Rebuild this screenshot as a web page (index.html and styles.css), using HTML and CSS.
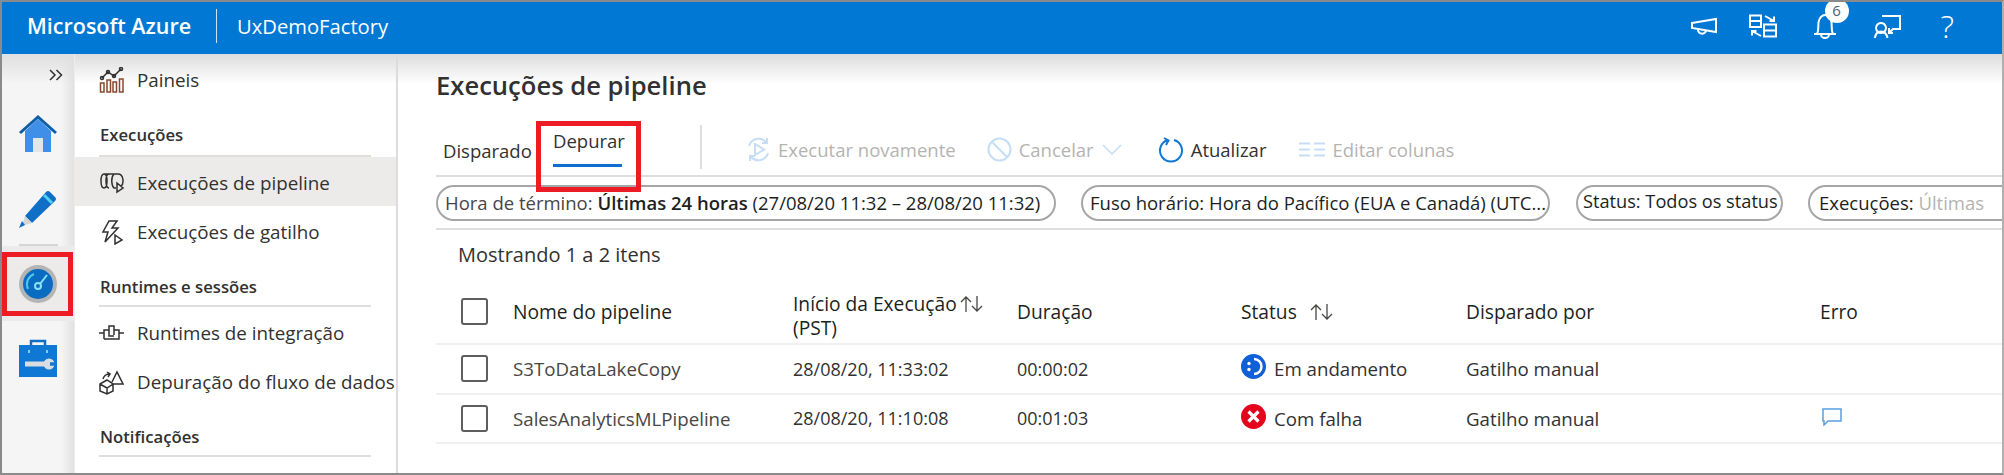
FILE: index.html
```html
<!DOCTYPE html>
<html lang="pt">

<head>
    <meta charset="UTF-8" />
    <title>Execuções de pipeline</title>
    <link rel="stylesheet" href="styles.css">
</head>

<body>
    <div class="frame">
        <header class="topbar">
            <span class="brand">Microsoft Azure</span>
            <span class="factory">UxDemoFactory</span>
            <div class="top-icons">
                <svg class="ti-mega" width="28" height="18" viewBox="0 0 28 18"><path d="M2 6 L26 2 V15 L2 11Z M8 12.500 a4 3.600 0 0 0 8 1" /></svg>
                <svg class="ti-switch" width="28" height="24" viewBox="0 0 28 24"><path d="M1 1.500 H12 V13 H1Z M1 7 H12 M16 2 L25 7 M25 2.500 V7 H20.500 M15 10.500 H27 V22.500 H15Z M15 16.500 H27 M12 22 L3 17 M3 21.500 V17 H7.500" /></svg>
                <span class="bell">
                    <svg width="24" height="26" viewBox="0 0 24 26"><path d="M1 21 H23 M4 21 C6 17 5 13 5.500 9.500 C6 5 9 2 12 2 C15 2 18 5 18.500 9.500 C19 13 18 17 20 21 M8 21.500 a4 3.500 0 0 0 8 0" /></svg>
                    <span class="badge">6</span>
                </span>
                <svg class="ti-feedback" width="27" height="25" viewBox="0 0 27 25"><path d="M8 2 H26 V15 H19 L15 19 M15 14 V19 H19 M7 9 a5 5 0 1 0 .01 0 M1 24 C1.500 19 4 17.500 7 17.500 C10 17.500 12.500 19 13.500 24" /></svg>
                <span class="help">?</span>
            </div>
        </header>

        <div class="shell">
            <aside class="rail">
                <div class="rail-top">
                    <svg width="14" height="12" viewBox="0 0 14 12"><path d="M1 1 L6 6 L1 11 M7.500 1 L12.500 6 L7.500 11" /></svg>
                </div>
                <div class="rail-item">
                    <svg width="38" height="37" viewBox="0 0 38 37">
                        <path d="M6 16 L19 4 L32 16 V37 H6Z" fill="#3f8fe8" />
                        <path d="M1 18 L19 2 L37 18" fill="none" stroke="#0f5ea8" stroke-width="3" />
                        <rect x="14" y="23" width="10" height="14" fill="#dfe6ee" />
                    </svg>
                </div>
                <div class="rail-item rail-sep">
                    <svg width="38" height="38" viewBox="0 0 38 38">
                        <path d="M27 2 Q29 0 31 2 L36 7 Q38 9 36 11 L13 33 L6 26Z" fill="#0f6fc6" />
                        <path d="M25 5 L33 13" stroke="#52d0f0" stroke-width="3" />
                        <path d="M6 26 L13 33 L3 36Z" fill="#d5d5d5" />
                        <path d="M3 31 L6 35 L0 38Z" fill="#0f6fc6" />
                    </svg>
                </div>
                <div class="rail-active">
                    <div class="rail-callout">
                        <svg width="38" height="38" viewBox="0 0 38 38">
                            <circle cx="19" cy="19" r="19" fill="#b4b4b4" />
                            <circle cx="19" cy="19" r="15" fill="#0a6cc0" />
                            <path d="M9 24 A11 11 0 0 1 15 9" fill="none" stroke="#50c8ee" stroke-width="2" />
                            <circle cx="19" cy="21" r="3" fill="none" stroke="#8be0f5" stroke-width="2" />
                            <path d="M21 19 L28 10" stroke="#8be0f5" stroke-width="2" />
                        </svg>
                    </div>
                </div>
                <div class="rail-item rail-tools">
                    <svg width="38" height="38" viewBox="0 0 38 38">
                        <path d="M12 7 V2 H26 V7" fill="none" stroke="#0f6fc6" stroke-width="2.500" />
                        <rect x="0" y="6" width="38" height="32" fill="#0f78d4" />
                        <path d="M6 25 H28" stroke="#d8dde2" stroke-width="5" />
                        <circle cx="30" cy="25" r="5.500" fill="#d8dde2" />
                        <path d="M31 25 H37" stroke="#0f78d4" stroke-width="3.500" />
                        <rect x="9" y="11" width="2" height="3" fill="#7fd0f0" />
                        <rect x="27" y="11" width="2" height="3" fill="#7fd0f0" />
                    </svg>
                </div>
            </aside>

            <nav class="nav">
                <a class="nav-item nav-first">
                    <svg width="25" height="26" viewBox="0 0 25 26">
                        <path d="M1.500 16 H5 V25 H1.500Z M8 13 H11.500 V25 H8Z M14 15 H17.500 V25 H14Z M20.500 12 H24 V25 H20.500Z" stroke="#8a4a30" />
                        <path d="M3 11 L9 5 L15 9 L22 2" />
                        <circle cx="3" cy="11" r="1.500" /><circle cx="9" cy="5" r="1.500" /><circle cx="15" cy="9" r="1.500" /><circle cx="22" cy="2" r="1.500" />
                    </svg>
                    Paineis
                </a>
                <div class="nav-head nav-head-first">Execuções</div>
                <a class="nav-item nav-selected">
                    <svg width="25" height="22" viewBox="0 0 25 22"><path d="M5 2 C1 2 1 16 5 16 C9 16 9 2 5 2 M10 2 C6 2 6 16 10 16 M5 2 H19 C25 2 25 12 22 14 M15 2 C12 5 12 13 15 16 H17 M18 11 L24 16 L18 20Z" /></svg>
                    Execuções de pipeline
                </a>
                <a class="nav-item">
                    <svg width="25" height="25" viewBox="0 0 25 25"><path d="M10 1 H18 L13 8 H19 L6 22 L9 12 H4Z M16 15 L23 20 L16 24Z" /></svg>
                    Execuções de gatilho
                </a>
                <div class="nav-head">Runtimes e sessões</div>
                <a class="nav-item">
                    <svg width="25" height="16" viewBox="0 0 25 16"><path d="M0 8 H5 M20 8 H25 M5 14 V5 H10 V1 H15 V10 M10 5 V11 H15 M15 5 H20 V14 H5" /></svg>
                    Runtimes de integração
                </a>
                <a class="nav-item">
                    <svg width="25" height="25" viewBox="0 0 25 25"><path d="M1 14 L8 10 L14 14 V21 L8 24 L1 21Z M1 14 L8 18 L14 14 M8 18 V24 M14 14 H24 L18 2 L13 12 M4 9 C5 5 8 4 11 4 M8 2 L11 4 L9 7" /></svg>
                    Depuração do fluxo de dados
                </a>
                <div class="nav-head">Notificações</div>
            </nav>

            <main class="content">
                <h1 class="title">Execuções de pipeline</h1>

                <div class="toolbar">
                    <span class="tab">Disparado</span>
                    <span class="tab tab-active">Depurar</span>
                    <span class="tool-sep"></span>
                    <span class="tool disabled tool-rerun">
                        <svg width="25" height="25" viewBox="0 0 25 25"><path d="M3 9 A10 10 0 0 1 20 5 M21 1 V6 H16 M22 16 A10 10 0 0 1 5 20 M4 24 V19 H9 M9 7 L18 12.500 L9 18Z" /></svg>
                        Executar novamente
                    </span>
                    <span class="tool disabled tool-cancel">
                        <svg width="25" height="25" viewBox="0 0 25 25"><circle cx="12.500" cy="12.500" r="11" /><path d="M5 5 L20 20" /></svg>
                        Cancelar
                        <svg class="chev" width="20" height="11" viewBox="0 0 20 11"><path d="M1 1 L10 10 L19 1" /></svg>
                    </span>
                    <span class="tool tool-refresh">
                        <svg width="26" height="26" viewBox="0 0 26 26"><path d="M10 3 A11 11 0 1 0 16 3 M6 1 L10.500 3.500 L8 8" /></svg>
                        Atualizar
                    </span>
                    <span class="tool disabled tool-cols">
                        <svg width="26" height="15" viewBox="0 0 26 15"><path d="M0 1.500 H11 M15 1.500 H26 M0 7.500 H11 M15 7.500 H26 M0 13.500 H11 M15 13.500 H26" /></svg>
                        Editar colunas
                    </span>
                </div>

                <div class="filters">
                    <span class="chip chip-time">Hora de término: <b>Últimas 24 horas</b> <span class="dark">(27/08/20 11:32 – 28/08/20 11:32)</span></span>
                    <span class="chip chip-zone dark">Fuso horário: Hora do Pacífico (EUA e Canadá) (UTC...</span>
                    <span class="chip chip-status dark">Status: Todos os status</span>
                    <span class="chip chip-runs dark">Execuções: <span class="muted">Últimas</span></span>
                </div>

                <p class="count">Mostrando 1 a 2 itens</p>

                <div class="row row-head">
                    <span class="check"></span>
                    <span class="name-head">Nome do pipeline</span>
                    <span class="start-col">Início da Execução<svg class="sort" width="24" height="18" viewBox="0 0 24 18"><path d="M6 17 V2 M1 7 L6 2 L11 7 M17 1 V16 M12 11 L17 16 L22 11" /></svg><br>(PST)</span>
                    <span>Duração</span>
                    <span>Status<svg class="sort sort-status" width="24" height="18" viewBox="0 0 24 18"><path d="M6 17 V2 M1 7 L6 2 L11 7 M17 1 V16 M12 11 L17 16 L22 11" /></svg></span>
                    <span>Disparado por</span>
                    <span>Erro</span>
                </div>
                <div class="row">
                    <span class="check"></span>
                    <span class="name">S3ToDataLakeCopy</span>
                    <span class="num">28/08/20, 11:33:02</span>
                    <span class="num">00:00:02</span>
                    <span class="status">
                        <svg width="25" height="25" viewBox="0 0 25 25"><circle cx="12.500" cy="12.500" r="12.500" fill="#0f5fd7" /><path d="M13 5 A7.500 7.500 0 0 1 13 20" fill="none" stroke="#fff" stroke-width="2.500" /><circle cx="8" cy="9.500" r="1.700" fill="#fff" /><circle cx="8" cy="15.500" r="1.700" fill="#fff" /></svg>
                        Em andamento
                    </span>
                    <span>Gatilho manual</span>
                    <span></span>
                </div>
                <div class="row">
                    <span class="check"></span>
                    <span class="name">SalesAnalyticsMLPipeline</span>
                    <span class="num">28/08/20, 11:10:08</span>
                    <span class="num">00:01:03</span>
                    <span class="status">
                        <svg width="25" height="25" viewBox="0 0 25 25"><circle cx="12.500" cy="12.500" r="12.500" fill="#e3051b" /><path d="M7.500 7.500 L17.500 17.500 M17.500 7.500 L7.500 17.500" stroke="#fff" stroke-width="3.200" /></svg>
                        Com falha
                    </span>
                    <span>Gatilho manual</span>
                    <span>
                        <svg class="comment" width="20" height="18" viewBox="0 0 20 18"><path d="M1 1 H19 V13 H6 L2 17 V13 H1Z" /></svg>
                    </span>
                </div>

                <div class="tab-callout"></div>
            </main>
        </div>
    </div>
</body>

</html>
```

FILE: styles.css
```css
:root {
    --azure: #0078d4;
    --line: #e6e6e6;
    --text: #323130;
    --muted: #b5b3b1;
    --selected: #edebe9;
    --callout: #ed1c24;
}

* {
    box-sizing: border-box;
}

html,
body {
    margin: 0;
    height: 100%;
    overflow: hidden;
}

body {
    font-family: "Open Sans", sans-serif;
    color: var(--text);
    background: white;
}

.frame {
    width: 2004px;
    height: 475px;
    border: 2px solid #8a8a8a;
    border-right-color: #b0b0b0;
    display: flex;
    flex-direction: column;
    overflow: hidden;
}

/* top bar */
.topbar {
    height: 52px;
    flex: none;
    background: var(--azure);
    color: white;
    display: flex;
    align-items: center;
    padding: 0 0 4px 25px;
}

.brand {
    font-size: 21.500px;
    font-weight: 600;
    width: 190px;
    border-right: 1px solid #cfe4f6;
    line-height: 34px;
    white-space: nowrap;
}

.factory {
    font-size: 20.200px;
    margin-left: 20px;
}

.top-icons {
    margin-left: auto;
    display: flex;
    align-items: center;
    height: 48px;
}

.top-icons svg {
    display: block;
    fill: none;
    stroke: white;
    stroke-width: 2;
}

.ti-mega {
    margin-right: 31px;
}

.ti-switch {
    margin-right: 36px;
}

.bell {
    position: relative;
    margin-right: 37px;
}

.badge {
    position: absolute;
    left: 12px;
    top: -14px;
    width: 24px;
    height: 24px;
    border-radius: 50%;
    background: white;
    color: #45627e;
    font-size: 15px;
    line-height: 22px;
    text-align: center;
}

.ti-feedback {
    margin-right: 40px;
}

.help {
    font-size: 32px;
    font-weight: 300;
    line-height: 40px;
    margin-right: 48px;
}

.shell {
    flex: 1;
    display: flex;
    min-height: 0;
}

/* icon rail */
.rail {
    width: 72px;
    flex: none;
    background:
        linear-gradient(#dfdfdf, rgba(245, 245, 245, 0) 30px),
        linear-gradient(to right, #f5f5f5 82%, #e2e2e2);
}

.rail svg {
    display: block;
}

.rail-top {
    height: 42px;
    padding: 15px 11px 0 0;
    display: flex;
    justify-content: flex-end;
}

.rail-top svg {
    fill: none;
    stroke: #323130;
    stroke-width: 1.500;
}

.rail-item {
    height: 75px;
    display: flex;
    align-items: center;
    justify-content: center;
}

.rail-tools {
    padding-bottom: 2px;
}

.rail-sep {
    position: relative;
}

.rail-sep::after {
    content: "";
    position: absolute;
    left: 17px;
    right: 16px;
    bottom: 0;
    height: 2px;
    background: #d6d6d6;
}

.rail-active {
    height: 75px;
    background: var(--selected);
    display: flex;
    align-items: center;
}

.rail-callout {
    width: 71px;
    height: 64px;
    border: 5px solid var(--callout);
    display: flex;
    align-items: center;
    justify-content: center;
}

/* navigation */
.nav {
    width: 324px;
    flex: none;
    border-left: 1px solid #ececec;
    border-right: 2px solid #dcdcdc;
    background: linear-gradient(#dcdcdc, white 30px) no-repeat;
    font-size: 18.800px;
}

.nav-item {
    height: 49px;
    padding: 3px 0 0 24px;
    display: flex;
    align-items: center;
    white-space: nowrap;
}

.nav-item svg {
    width: 25px;
    flex: none;
    margin-right: 13px;
    fill: none;
    stroke: #323130;
    stroke-width: 1.500;
}

.nav-first {
    height: 51px;
    padding-top: 0;
}

.nav-selected {
    background: var(--selected);
}

.nav-head {
    height: 52px;
    margin: 0 25px 0 24px;
    border-bottom: 2px solid #e1dfdd;
    padding: 20px 0 0 1px;
    font-size: 16.700px;
    font-weight: 600;
    line-height: 24px;
}

.nav-head-first {
    padding-top: 18px;
}

/* main area */
.content {
    flex: 1;
    min-width: 0;
    position: relative;
    background: linear-gradient(#dcdcdc, white 30px) no-repeat;
    overflow: hidden;
}

.title {
    margin: 0;
    height: 67px;
    padding: 14px 0 0 38px;
    font-size: 25.600px;
    font-weight: 600;
    line-height: 36px;
}

.toolbar {
    height: 56px;
    margin-left: 38px;
    border-bottom: 2px solid #dedede;
    display: flex;
    align-items: center;
    font-size: 18.500px;
    white-space: nowrap;
}

.tab {
    margin-left: 7px;
    width: 108px;
    padding-top: 4px;
}

.tab-active {
    margin-left: 2px;
    width: 147px;
    height: 49px;
    padding: 4px 0 0 0;
    position: relative;
    line-height: 26px;
}

.tab-active::after {
    content: "";
    position: absolute;
    left: 0;
    width: 69px;
    top: 40px;
    height: 3px;
    background: #0f6fd0;
}

.tool-sep {
    width: 2px;
    height: 44px;
    background: #dedede;
    margin: 0 44px 2px 0;
}

.tool {
    display: flex;
    align-items: center;
    padding-top: 3px;
}

.tool svg {
    fill: none;
    stroke: #0f78d4;
    stroke-width: 2;
    margin-right: 7px;
    flex: none;
}

.tool.disabled {
    color: var(--muted);
}

.tool.disabled svg {
    stroke: #c5def5;
}

.tool .chev {
    stroke: #a9a7a5;
    stroke-width: 1.500;
    margin: 0 0 0 8px;
}

.tool-cancel {
    margin-left: 31px;
}

.tool-refresh {
    margin-left: 36px;
}

.tool-cols {
    margin-left: 33px;
}

.filters {
    height: 53px;
    margin-left: 38px;
    border-bottom: 2px solid #dedede;
    display: flex;
    align-items: flex-start;
    padding-top: 8px;
    font-size: 18.500px;
    white-space: nowrap;
}

.chip {
    height: 36px;
    border: 2px solid #a6a6a6;
    border-radius: 18px;
    padding: 0 0 0 7px;
    line-height: 31px;
    flex: none;
    color: #484644;
}

.chip b {
    font-weight: 600;
    color: #201f1e;
}

.dark {
    color: #201f1e;
}

.muted {
    color: var(--muted);
}

.chip-time {
    width: 620px;
}

.chip-zone {
    width: 469px;
    margin-left: 25px;
}

.chip-status {
    width: 207px;
    margin-left: 26px;
    padding-left: 5px;
    font-size: 18.200px;
    line-height: 28px;
}

.chip-runs {
    width: 300px;
    margin-left: 25px;
    padding-left: 9px;
}

.count {
    margin: 0;
    height: 50px;
    padding: 13px 0 0 60px;
    font-size: 20px;
    line-height: 24px;
}

.row {
    height: 49.500px;
    margin-left: 38px;
    border-bottom: 2px solid #f0f0f0;
    display: grid;
    grid-template-columns: 53px 279px 224px 224px 225px 354px 1fr;
    align-items: center;
    padding-left: 25px;
    font-size: 18.700px;
    white-space: nowrap;
}

.row-head {
    height: 65px;
    color: #201f1e;
    font-size: 19.200px;
}

.name-head {
    margin-left: -1px;
}

.start-col {
    line-height: 24px;
    padding-top: 8px;
}

.sort {
    fill: none;
    stroke: #484644;
    stroke-width: 1.300;
    margin-left: 3px;
    vertical-align: -2px;
}

.sort-status {
    margin-left: 13px;
}

.check {
    width: 27px;
    height: 27px;
    border: 2px solid #605e5c;
    border-radius: 3px;
}

.name {
    color: #484644;
    margin-left: -1px;
}

.num {
    font-size: 18px;
}

.status {
    display: flex;
    align-items: center;
    gap: 8px;
}

.status svg {
    flex: none;
    margin-top: -4px;
}

.comment {
    display: block;
    margin: -3px 0 0 2px;
    fill: none;
    stroke: #5a9fe0;
    stroke-width: 1.500;
}

/* annotation drawn on top of the tabs */
.tab-callout {
    position: absolute;
    left: 138px;
    top: 67px;
    width: 105px;
    height: 71px;
    border: 5px solid var(--callout);
}
```
